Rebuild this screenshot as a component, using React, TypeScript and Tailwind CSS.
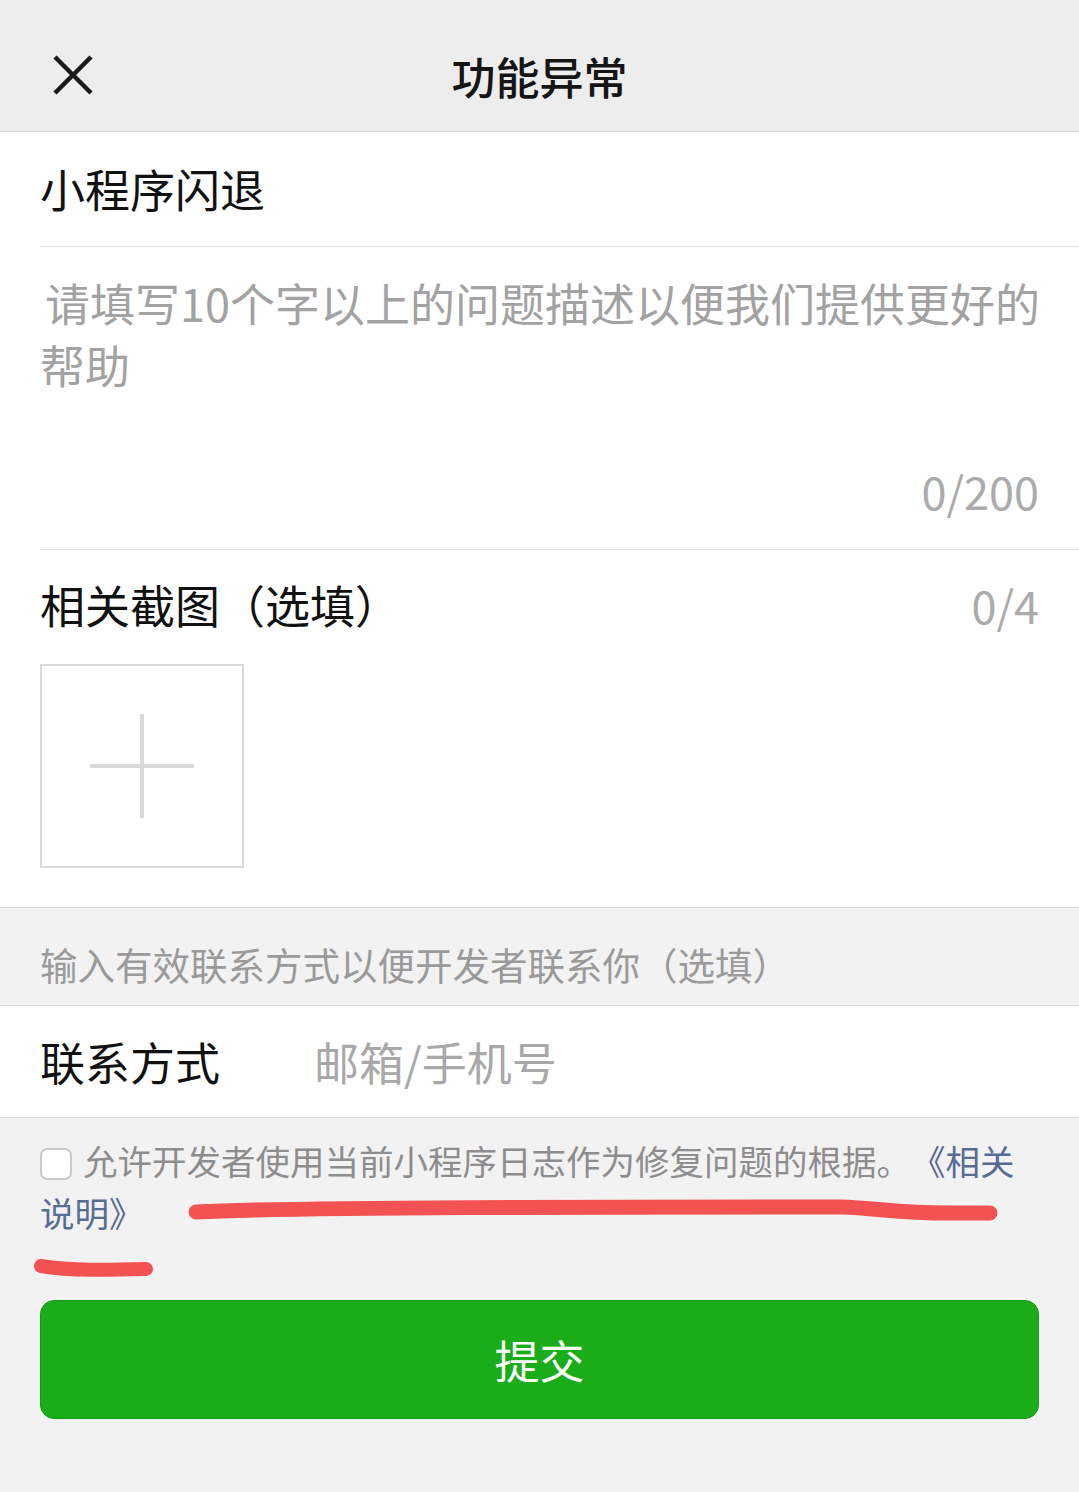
import React from 'react';

function CloseIcon() {
  return (
    <svg viewBox="0 0 40 40" className="h-[40px] w-[40px]" aria-hidden>
      <path d="M2 2L38 38M38 2L2 38" stroke="#1a1a1a" strokeWidth="4.5" strokeLinecap="butt" />
    </svg>
  );
}

function Divider() {
  return <div className="ml-[40px] h-px bg-[#e2e2e2]" />;
}

export default function App() {
  return (
    <div className="relative min-h-[1492px] w-[1079px] bg-[#f2f2f2] font-['Noto_Sans_CJK_SC','Noto_Sans',sans-serif] text-[#111] [text-spacing-trim:space-all]">
      {/* Nav bar */}
      <header className="relative flex h-[132px] items-center justify-center border-b border-[#d9d9d9] bg-[#ededed] pt-[20px]">
        <button className="absolute left-[53px] top-[55px] flex items-center justify-center">
          <CloseIcon />
        </button>
        <h1 className="text-[44px] font-medium leading-[62px] text-[#151515]">功能异常</h1>
      </header>

      {/* Form card */}
      <section className="border-b border-[#dedede] bg-white">
        <div className="flex h-[114px] items-center pl-[40px] text-[45px] leading-[62px]">小程序闪退</div>
        <Divider />

        <div className="pb-[27px] pl-[40px] pr-[40px] pt-[25px]">
          <p className="-mr-[30px] indent-[5px] text-[45px] leading-[62px] text-[#a2a2a2]">
            请填写10个字以上的问题描述以便我们提供更好的帮助
          </p>
          <p className="mt-[64px] text-right text-[45px] leading-[62px] text-[#ababab]">0/200</p>
        </div>
        <Divider />

        <div className="px-[40px] pb-[39px] pt-[24px]">
          <div className="flex items-center justify-between text-[45px] leading-[62px]">
            <span>相关截图（选填）</span>
            <span className="text-[#ababab]">0/4</span>
          </div>
          <div className="mt-[28px] flex h-[204px] w-[204px] items-center justify-center border-2 border-[#d9d9d9]">
            <svg viewBox="0 0 104 104" className="h-[104px] w-[104px]" aria-hidden>
              <path d="M0 52H104M52 0V104" stroke="#d9d9d9" strokeWidth="4" />
            </svg>
          </div>
        </div>
      </section>

      {/* Contact hint */}
      <div className="h-[97px] px-[40px] pt-[25px] text-[37.5px] leading-[62px] text-[#9a9a9a]">
        输入有效联系方式以便开发者联系你（选填）
      </div>

      {/* Contact row */}
      <div className="flex h-[113px] items-center border-y border-[#dedede] bg-white px-[40px] text-[45px] leading-[62px]">
        <span className="w-[274px] shrink-0">联系方式</span>
        <span className="text-[#a8a8a8]">邮箱/手机号</span>
      </div>

      {/* Log permission */}
      <p className="px-[40px] pt-[16px] text-[34.5px] leading-[52px] text-[#8d8d8d]">
        <span className="mr-[11px] inline-block h-[32px] w-[32px] translate-y-[5px] rounded-[7px] border-2 border-[#c9c9c9] bg-white" />
        允许开发者使用当前小程序日志作为修复问题的根据。
        <span className="text-[#576b95]">《相关说明》</span>
      </p>

      {/* Submit */}
      <div className="px-[40px] pt-[62px]">
        <button className="flex h-[119px] w-full items-center justify-center rounded-[14px] border border-[#179a16] bg-[#1aad19] text-[45px] text-white">
          提交
        </button>
      </div>

      {/* Red hand-drawn annotation strokes */}
      <svg viewBox="0 0 1079 1492" className="pointer-events-none absolute inset-0 h-[1492px] w-[1079px]" aria-hidden>
        <path
          d="M196 1212 C 300 1207, 600 1207, 840 1207 C 880 1208, 900 1214, 960 1213 L 990 1213"
          stroke="#f25252"
          strokeWidth="15"
          strokeLinecap="round"
          fill="none"
        />
        <path
          d="M41 1266 C 70 1271, 110 1270, 146 1269"
          stroke="#f25252"
          strokeWidth="14"
          strokeLinecap="round"
          fill="none"
        />
      </svg>
    </div>
  );
}
